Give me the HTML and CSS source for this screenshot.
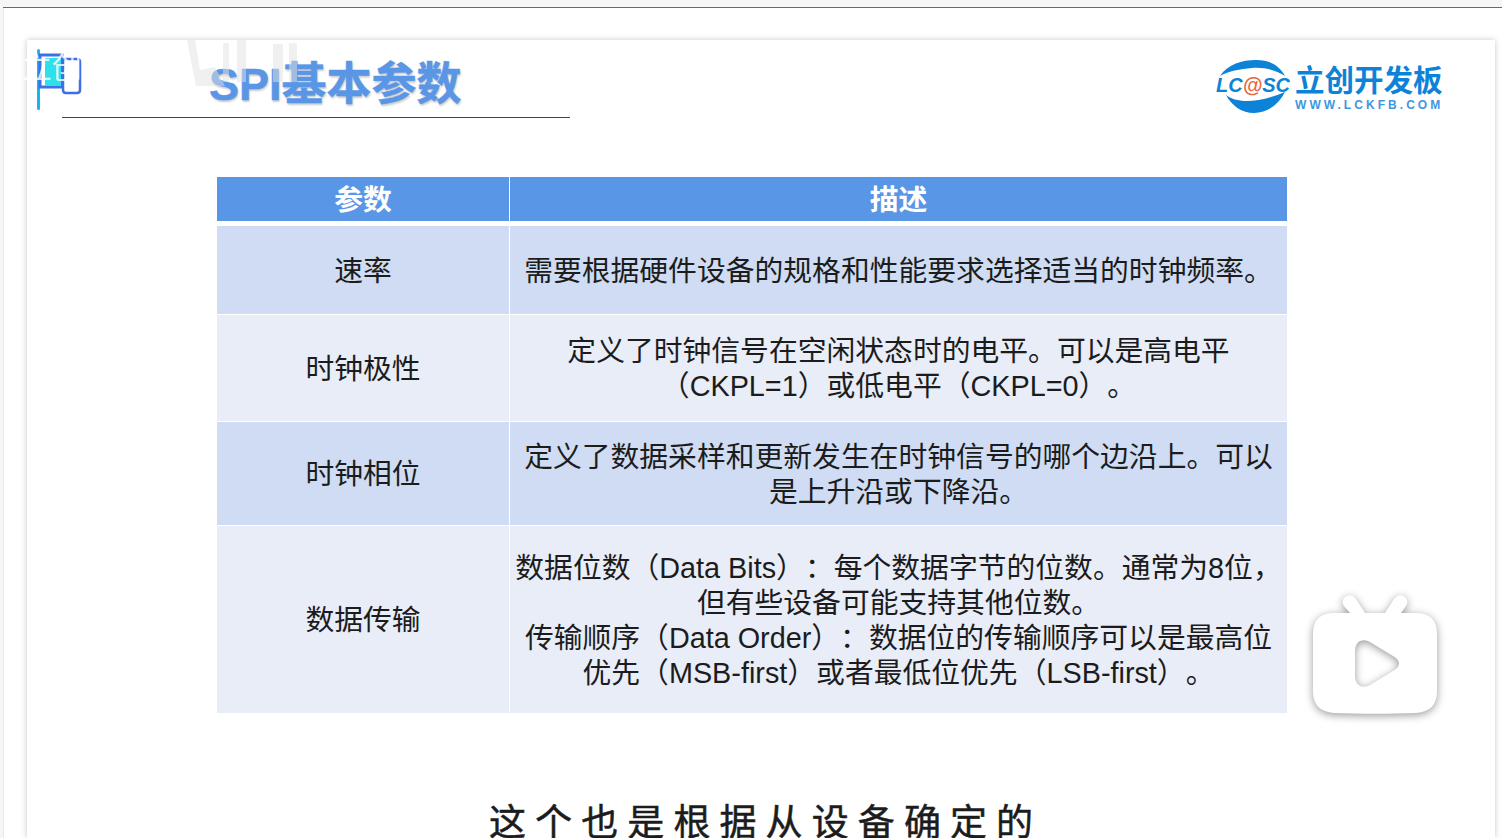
FILE: index.html
```html
<!DOCTYPE html>
<html lang="zh">
<head>
<meta charset="utf-8">
<title>SPI基本参数</title>
<link rel="stylesheet" href="styles.css">
</head>
<body>
<div class="topbar"></div>
<main class="viewer">
  <section class="slide">
    <header class="slide-head">
      <svg class="flag" width="46" height="64" viewBox="0 0 46 64">
        <rect x="0" y="0" width="3" height="61" rx="1.5" fill="#12b5f5"/>
        <path d="M3 6H25V38H3Z" fill="#fff" stroke="#3f6fe8" stroke-width="3"/>
        <rect x="8" y="9" width="16" height="28" fill="#2ee0ea"/>
        <path d="M26 10H40Q43 10 43 13V41Q43 44 40 44H29Q26 44 26 41Z" fill="#fff" stroke="#3f6fe8" stroke-width="2.5"/>
      </svg>
      <h1 class="title">SPI基本参数</h1>
      <div class="rule"></div>
      <span class="wm-text">立创开发板</span>
      <svg class="wm-logo" width="116" height="46" viewBox="0 0 116 46">
        <path class="wm-fill" d="M0 0H8L13 30 28 27 38 46 9 46Z"/>
        <path class="wm-fill" d="M36 3H42V42H36ZM50 0H59V42H50ZM86 4H96V42H86ZM102 3H110V42H102Z"/>
      </svg>
      <div class="brand">
        <svg class="brand-mark" width="76" height="56" viewBox="0 0 76 56">
          <path d="M6 18C14 6 28 2 42 2C56 2 66 8 71 18C62 12 50 9 38 10C26 11 15 13 6 18Z" fill="#0d83d8"/>
          <path d="M12 37C22 45 42 46 71 34C64 48 52 55 40 55C28 55 18 48 12 37Z" fill="#0d83d8"/>
          <text class="brand-lc" x="2" y="34">LC<tspan class="brand-at">@</tspan>SC</text>
        </svg>
        <div class="brand-copy">
          <div class="brand-name">立创开发板</div>
          <div class="brand-url">WWW.LCKFB.COM</div>
        </div>
      </div>
    </header>

    <div class="table">
      <div class="cell head">参数</div>
      <div class="cell head">描述</div>

      <div class="cell dark">速率</div>
      <div class="cell dark">需要根据硬件设备的规格和性能要求选择适当的时钟频率。</div>

      <div class="cell light">时钟极性</div>
      <div class="cell light">定义了时钟信号在空闲状态时的电平。可以是高电平<br>（CKPL=1）或低电平（CKPL=0）。</div>

      <div class="cell dark">时钟相位</div>
      <div class="cell dark">定义了数据采样和更新发生在时钟信号的哪个边沿上。可以<br>是上升沿或下降沿。</div>

      <div class="cell light">数据传输</div>
      <div class="cell light">数据位数（Data Bits）：每个数据字节的位数。通常为8位，<br>但有些设备可能支持其他位数。<br>传输顺序（Data Order）：数据位的传输顺序可以是最高位<br>优先（MSB-first）或者最低位优先（LSB-first）。</div>
    </div>

    <p class="caption">这个也是根据从设备确定的</p>
  </section>

  <svg class="tv" width="130" height="124" viewBox="0 0 130 124">
    <path class="tv-body" fill-rule="evenodd" d="M33 3C37 0 41 1 44 5L53 19H73L82 5C85 1 89 0 93 3C96 6 96 9 94 12L89 19H104C118 19 125 26 125 40V97C125 111 118 118 104 119C78 120 48 120 22 119C8 118 1 111 1 97V40C1 26 8 19 22 19H38L32 12C30 9 30 6 33 3ZM43 58V81C43 92 50 95 58 91L81 77C89 73 89 66 81 62L58 48C50 44 43 47 43 58Z"/>
  </svg>
</main>
</body>
</html>
```
FILE: styles.css
```css
* { box-sizing: border-box; }
html, body { margin: 0; height: 100%; }
body {
  width: 1502px;
  height: 838px;
  overflow: hidden;
  background: #f6f6f6;
  font-family: "Liberation Sans", "Noto Sans CJK SC", sans-serif;
  color: #1f1f1f;
  text-spacing-trim: space-all;
}
.topbar {
  height: 8px;
  border-bottom: 1px solid #6a6a6a;
  background: #f6f6f6;
  margin-left: 3px;
}
.viewer {
  position: relative;
  height: 830px;
  margin-left: 3px;
  padding: 32px 7px 0 23px;
  background: #fff;
  border-left: 1px solid #e9e9e9;
}
.slide {
  height: 798px;
  background: #fff;
  box-shadow: 0 0 6px rgba(0, 0, 0, .22);
}
.slide-head {
  position: relative;
  height: 137px;
}
.flag { position: absolute; left: 10px; top: 9px; }
.title {
  position: absolute;
  left: 182px;
  top: 17px;
  margin: 0;
  font-size: 45px;
  line-height: 56px;
  font-weight: 700;
  color: #5a96e6;
  -webkit-text-stroke: .5px #5a96e6;
  text-shadow: 1px 2px 2px rgba(80, 80, 80, .3);
}
.rule {
  position: absolute;
  left: 35px;
  top: 77px;
  width: 508px;
  height: 1px;
  background: #444;
}
.wm-text {
  position: absolute;
  left: -5px;
  top: 9px;
  font-size: 30px;
  line-height: 38px;
  color: rgba(255, 255, 255, .8);
  filter: blur(.5px);
}
.wm-logo { position: absolute; left: 160px; top: 0; }
.wm-fill { fill: rgba(225, 225, 225, .5); }
.brand {
  position: absolute;
  left: 1187px;
  top: 18px;
  display: flex;
  gap: 5px;
}
.brand-lc {
  font: italic 700 20px "Liberation Sans", sans-serif;
  fill: #0d83d8;
}
.brand-at { fill: #e8693a; }
.brand-copy { padding-top: 6px; }
.brand-name {
  font-size: 29.5px;
  line-height: 34px;
  font-weight: 700;
  color: #0d83d8;
}
.brand-url {
  font-size: 12px;
  line-height: 14px;
  letter-spacing: 3.05px;
  font-weight: 700;
  color: #3f97de;
}
.table {
  display: grid;
  width: 1070px;
  margin-left: 190px;
  grid-template-columns: 292px 777px;
  grid-template-rows: 48px 88px 106px 103px 187px;
  gap: 1px;
  text-align: center;
  font-size: 28.8px;
  line-height: 35px;
}
.cell {
  display: flex;
  align-items: center;
  justify-content: center;
  padding-top: 2px;
  color: #1c1c1c;
  white-space: nowrap;
}
.head {
  background: #5a96e6;
  color: #fff;
  font-weight: 700;
  height: 44px;
  padding-top: 3px;
}
.dark { background: #cfdcf3; }
.light { background: #e8edf8; }
.caption {
  margin: 89px 0 0;
  padding-left: 462px;
  font-size: 37px;
  line-height: 44px;
  letter-spacing: 9.1px;
  color: #1c1c1c;
  -webkit-text-stroke: .5px #1c1c1c;
}
.tv {
  position: absolute;
  left: 1308px;
  top: 586px;
  filter: drop-shadow(0 2px 4px rgba(0, 0, 0, .4));
}
.tv-body { fill: #fff; }
```
